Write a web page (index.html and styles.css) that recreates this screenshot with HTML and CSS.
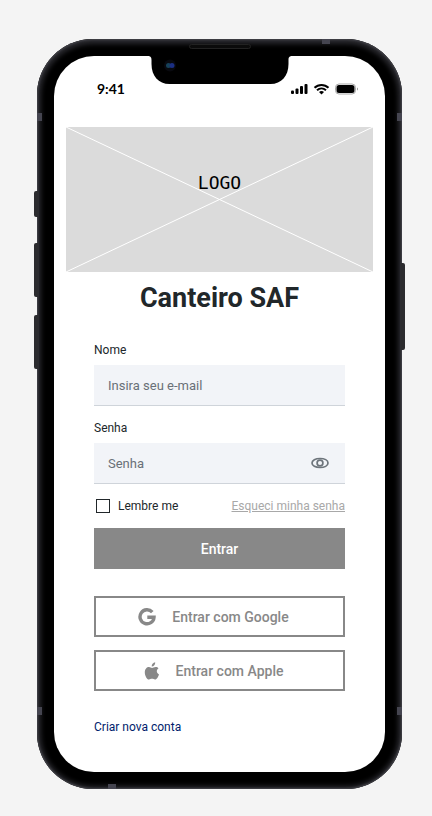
FILE: index.html
```html
<!DOCTYPE html>
<html lang="pt-BR">
<head>
<meta charset="utf-8">
<meta name="viewport" content="width=device-width, initial-scale=1">
<title>Canteiro SAF</title>
<link rel="stylesheet" href="styles.css">
</head>
<body>
<div class="phone">
  <span class="key key-mute"></span>
  <span class="key key-up"></span>
  <span class="key key-down"></span>
  <span class="key key-power"></span>
  <span class="band band-lt"></span>
  <span class="band band-lb"></span>
  <span class="band band-rt"></span>
  <span class="band band-rb"></span>
  <span class="band band-top"></span>
  <span class="band band-bottom"></span>
  <span class="speaker"></span>
  <div class="screen">
    <svg class="notch" width="145" height="29" viewBox="0 0 145 29" aria-hidden="true">
      <path d="M0 0C3 0 4 1 4 4V8C4 20 11 28 22 28H123C134 28 141 20 141 8V4C141 1 142 0 145 0Z" fill="#000"/>
      <circle cx="22.500" cy="9.500" r="6" fill="#08090f"/>
      <circle cx="21" cy="9.500" r="2.500" fill="#164158"/>
      <circle cx="24.500" cy="9.500" r="2.500" fill="#1b2f83"/>
    </svg>
    <header class="status">
      <span class="time">9:41</span>
      <svg class="signals" width="68" height="12" viewBox="0 0 68 12" aria-hidden="true">
        <g fill="#000">
          <rect x="0" y="7.500" width="3" height="3.500" rx="1"/>
          <rect x="4.500" y="5.500" width="3" height="5.500" rx="1"/>
          <rect x="9" y="3" width="3" height="8" rx="1"/>
          <rect x="13.500" y="1" width="3" height="10" rx="1"/>
        </g>
        <g fill="none" stroke="#000" stroke-width="2">
          <path d="M23.500 4.800C27.500 0.900 33.500 0.900 37.500 4.800"/>
          <path d="M26 7.300C28.700 4.800 32.300 4.800 35 7.300"/>
        </g>
        <path d="M28 9C29.500 7.700 31.500 7.700 33 9L30.500 11.500Z" fill="#000"/>
        <rect x="44.500" y="1" width="20" height="10" rx="3.500" fill="none" stroke="#a9a9a9"/>
        <rect x="45.500" y="2" width="18" height="8" rx="2.500" fill="#000"/>
        <path d="M66 4.500C67.300 5 67.300 7 66 7.500Z" fill="#999"/>
      </svg>
    </header>
    <div class="logo">
      <svg class="cross" viewBox="0 0 100 100" preserveAspectRatio="none" aria-hidden="true">
        <path d="M0 0L100 100M0 100L100 0" stroke="#fff" vector-effect="non-scaling-stroke"/>
      </svg>
      <span class="logo-text">LOGO</span>
    </div>
    <h1 class="title">Canteiro SAF</h1>
    <form class="form">
      <label class="label" for="name">Nome</label>
      <div class="field">
        <input class="input" id="name" type="text" placeholder="Insira seu e-mail">
      </div>
      <label class="label" for="password">Senha</label>
      <div class="field">
        <input class="input" id="password" type="password" placeholder="Senha">
        <button class="eye" type="button" aria-label="Mostrar senha">
          <svg width="18" height="12" viewBox="0 0 18 12" fill="none" stroke="#6d747b" stroke-width="1.700">
            <path d="M1 6C1 3.200 4.500 1.500 9 1.500S17 3.200 17 6S13.500 10.500 9 10.500S1 8.800 1 6Z"/>
            <circle cx="9" cy="6" r="2.900"/>
          </svg>
        </button>
      </div>
      <div class="options">
        <label class="remember"><input class="check" type="checkbox">Lembre me</label>
        <a class="forgot" href="#">Esqueci minha senha</a>
      </div>
      <button class="button primary" type="submit">Entrar</button>
      <button class="button outline google" type="button">
        <svg width="18" height="18" viewBox="0 0 18 18" aria-hidden="true">
          <path d="M14.300 4.200A7 7 0 1 0 16 9.300H9.300" fill="none" stroke="#888" stroke-width="3.400"/>
        </svg>
        Entrar com Google
      </button>
      <button class="button outline apple" type="button">
        <svg width="16" height="18" viewBox="0 0 16 18" fill="#888" aria-hidden="true">
          <path d="M11.200 0.300C11.400 2.600 9.700 4.500 7.700 4.600C7.400 2.500 9.200 0.600 11.200 0.300Z"/>
          <path d="M14.500 6.300C12.100 7.900 12.300 11.200 15 12.400C14.400 14.200 12.900 17.500 11 17.500C9.900 17.500 9.400 16.800 8 16.800S6.100 17.500 5 17.500C2.900 17.500 0.800 13.500 0.800 10.400C0.800 7.100 2.800 5.100 5 5.100C6.300 5.100 7.200 5.900 8.100 5.900C8.900 5.900 10.100 5 11.700 5C12.800 5 13.900 5.500 14.500 6.300Z"/>
        </svg>
        Entrar com Apple
      </button>
      <a class="create" href="#">Criar nova conta</a>
    </form>
  </div>
</div>
</body>
</html>
```
FILE: styles.css
```css
* {
  box-sizing: border-box;
}

body {
  margin: 0;
  padding: 39px 30px 27px 37px;
  background: #f4f4f4;
  font-family: Roboto, "Liberation Sans", sans-serif;
  color: #21272a;
}

.phone {
  position: relative;
  padding: 17px;
  border-radius: 56px;
  background: #000;
  box-shadow: inset 0 0 2px 1px #45454b, inset 0 1px 5px 4px #29292e;
}

.key {
  position: absolute;
  left: -3px;
  width: 4px;
  height: 54px;
  border-radius: 2px 0 0 2px;
  background: #2b2b2e;
}

.key-mute { top: 152px; height: 26px; }
.key-up { top: 204px; }
.key-down { top: 276px; }

.key-power {
  top: 224px;
  right: -3px;
  left: auto;
  height: 87px;
  border-radius: 0 2px 2px 0;
}

.band {
  position: absolute;
  width: 5px;
  height: 8px;
  background: #454550;
}

.band-lt { top: 74px; left: 0; }
.band-lb { bottom: 74px; left: 0; }
.band-rt { top: 74px; right: 0; }
.band-rb { bottom: 74px; right: 0; }
.band-top { top: 0; right: 72px; width: 8px; height: 5px; }
.band-bottom { bottom: 0; left: 71px; width: 8px; height: 5px; }

.speaker {
  position: absolute;
  top: 5px;
  left: 50%;
  width: 62px;
  height: 5px;
  border: 1px solid #222;
  border-radius: 3px;
  background: #0b0b0b;
  transform: translateX(-50%);
}

.screen {
  position: relative;
  padding-bottom: 37px;
  border-radius: 40px;
  background: #fff;
}

.notch {
  position: absolute;
  top: 0;
  left: 50%;
  transform: translateX(-50%);
}

.status {
  display: flex;
  align-items: center;
  justify-content: space-between;
  height: 71px;
  padding: 0 26px 6px 43px;
}

.time {
  font: 700 14px/20px Lato, sans-serif;
  color: #000;
}

.logo {
  position: relative;
  height: 145px;
  margin: 0 12px;
  padding-top: 44px;
  background: #dbdbdb;
  text-align: center;
}

.cross {
  position: absolute;
  inset: 0;
  width: 100%;
  height: 100%;
}

.logo-text {
  position: relative;
  font: 18px/24px "DejaVu Sans Mono", monospace;
  color: #000;
}

.title {
  margin: 8px 0 24px;
  font-size: 27px;
  line-height: 36px;
  font-weight: 700;
  text-align: center;
}

.form {
  display: flex;
  flex-direction: column;
  padding: 0 40px;
}

.label {
  padding: 2px 0 7px;
  font-size: 12px;
  line-height: 16px;
}

.field {
  position: relative;
  margin-bottom: 12px;
}

.input {
  display: block;
  width: 100%;
  height: 41px;
  padding: 0 14px;
  border: 0;
  border-bottom: 1px solid #cfd4da;
  border-radius: 0;
  background: #f2f4f8;
  font: 13px/20px Roboto, sans-serif;
  color: #21272a;
}

.input::placeholder {
  color: #697077;
  opacity: 1;
}

.eye {
  position: absolute;
  top: 10px;
  right: 16px;
  display: flex;
  align-items: center;
  height: 20px;
  padding: 0;
  border: 0;
  background: none;
}

.options {
  display: flex;
  align-items: center;
  justify-content: space-between;
  height: 20px;
  margin-bottom: 12px;
  font-size: 12px;
  line-height: 16px;
}

.remember {
  display: flex;
  align-items: center;
  gap: 8px;
}

.check {
  appearance: none;
  width: 14px;
  height: 14px;
  margin: 0 0 0 2px;
  border: 1px solid #21272a;
  background: #fff;
}

.forgot {
  color: #a8a8a8;
}

.button {
  display: flex;
  align-items: center;
  justify-content: center;
  height: 41px;
  padding: 0;
  border: 2px solid #888;
  border-radius: 0;
  font: 500 14px/20px Roboto, sans-serif;
}

.primary {
  margin-bottom: 27px;
  background: #888;
  color: #fff;
}

.outline {
  gap: 16px;
  margin-bottom: 13px;
  padding-right: 12px;
  background: #fff;
  color: #888;
}

.create {
  align-self: flex-start;
  margin-top: 15px;
  font-size: 12px;
  line-height: 16px;
  color: #001d6c;
  text-decoration: none;
}
```
